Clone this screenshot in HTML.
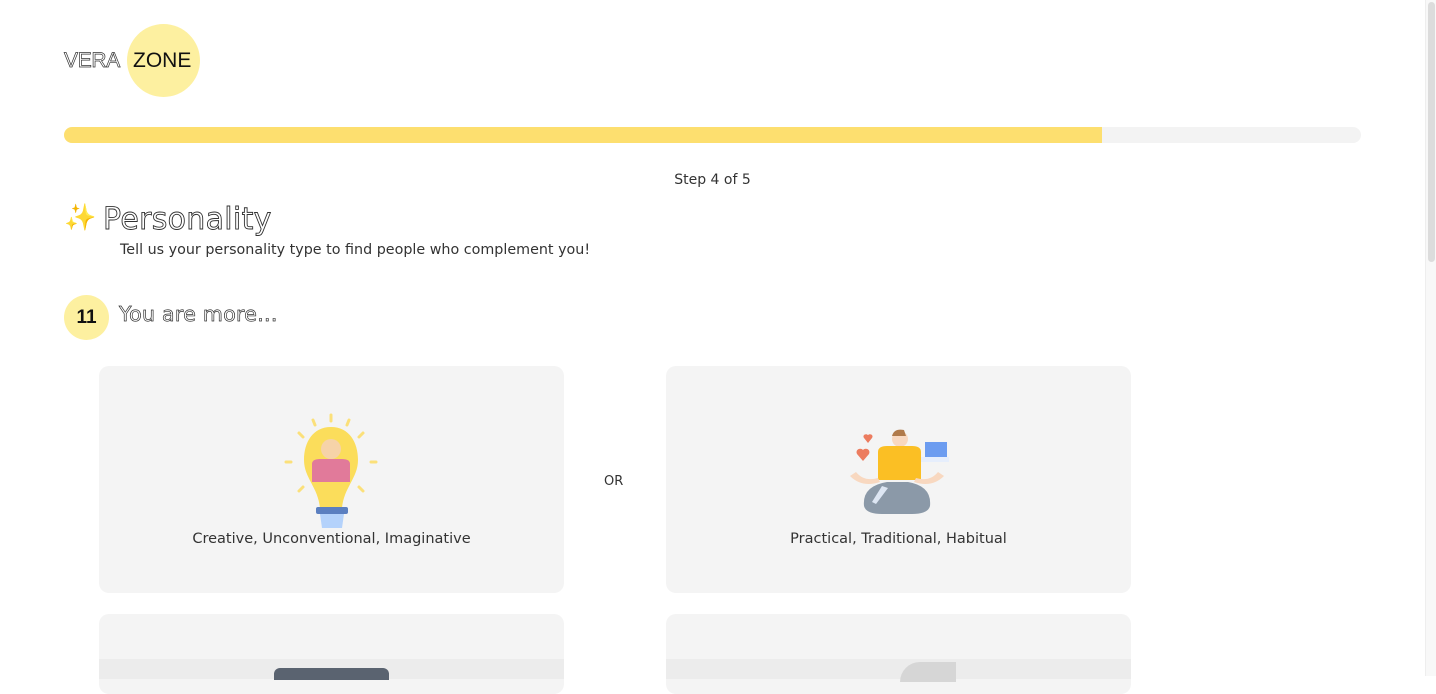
<!DOCTYPE html>
<html><head><style>
*{margin:0;padding:0;box-sizing:border-box}
body{width:1436px;height:676px;overflow:hidden;background:#fff;font-family:"DejaVu Sans",sans-serif;position:relative}
.o{color:#fff;-webkit-text-stroke:0.7px #333}
.abs{position:absolute}
</style></head><body>
<div class="abs" style="left:127px;top:24px;width:73px;height:73px;border-radius:50%;background:#fdf0a0"></div>
<div class="abs o" style="left:64px;top:49px;font-size:21px;letter-spacing:-0.3px;font-family:'Liberation Sans',sans-serif">VERA</div>
<div class="abs" style="left:133px;top:49px;font-size:21px;color:#111;font-family:'Liberation Sans',sans-serif">ZONE</div>
<div class="abs" style="left:64px;top:127px;width:1297px;height:16px;border-radius:8px;background:#f3f3f3"></div>
<div class="abs" style="left:64px;top:127px;width:1038px;height:16px;border-radius:8px 0 0 8px;background:#fddf6f"></div>
<div class="abs" style="left:0;width:1425px;top:172px;text-align:center;font-size:14px;color:#333">Step 4 of 5</div>
<div class="abs" style="left:64px;top:203px;font-size:26px;color:#f5c518">✨</div>
<div class="abs o" style="left:103px;top:202px;font-size:30px;letter-spacing:0.3px;-webkit-text-stroke:0.9px #333">Personality</div>
<div class="abs" style="left:120px;top:242px;font-size:14.3px;color:#333">Tell us your personality type to find people who complement you!</div>
<div class="abs" style="left:64px;top:295px;width:45px;height:45px;border-radius:50%;background:#fdf0a0;font-size:19px;font-weight:bold;text-align:center;line-height:45px;color:#111;font-family:'Liberation Sans',sans-serif">11</div>
<div class="abs o" style="left:119px;top:302px;font-size:20.5px;letter-spacing:0.3px">You are more...</div>
<div class="abs" style="left:99px;top:366px;width:465px;height:227px;border-radius:10px;background:#f4f4f4"></div>
<div class="abs" style="left:666px;top:366px;width:465px;height:227px;border-radius:10px;background:#f4f4f4"></div>
<div class="abs" style="left:99px;top:614px;width:465px;height:80px;border-radius:10px;background:#f4f4f4"></div>
<div class="abs" style="left:666px;top:614px;width:465px;height:80px;border-radius:10px;background:#f4f4f4"></div>
<div class="abs" style="left:99px;top:659px;width:465px;height:20px;background:#ececec"></div>
<div class="abs" style="left:666px;top:659px;width:465px;height:20px;background:#ececec"></div>
<div class="abs" style="left:274px;top:668px;width:115px;height:12px;border-radius:6px 6px 0 0;background:#5a6370"></div>
<div class="abs" style="left:900px;top:662px;width:56px;height:20px;border-radius:40px 0 0 0;background:#d6d6d6"></div>
<svg class="abs" style="left:280px;top:412px" width="102" height="118" viewBox="0 0 102 118">
<g stroke="#fbe07a" stroke-width="3" stroke-linecap="round">
<line x1="51" y1="3" x2="51" y2="9"/><line x1="33" y1="8" x2="35" y2="13"/><line x1="69" y1="8" x2="67" y2="13"/>
<line x1="19" y1="21" x2="23" y2="25"/><line x1="83" y1="21" x2="79" y2="25"/><line x1="6" y1="50" x2="11" y2="50"/><line x1="91" y1="50" x2="96" y2="50"/>
<line x1="19" y1="79" x2="23" y2="75"/><line x1="83" y1="79" x2="79" y2="75"/></g>
<path d="M51 15C33 15 24 30 24 48C24 66 38 75 40 96H62C64 75 78 66 78 48C78 30 69 15 51 15Z" fill="#fbdd5b"/>
<circle cx="51" cy="37" r="10" fill="#f6d3a8"/>
<path d="M32 52Q32 47 40 47H62Q70 47 70 52V70H32Z" fill="#e17a9a"/>
<rect x="36" y="95" width="32" height="7" rx="2" fill="#5b7fc0"/>
<path d="M40 102H64L62 116H42Z" fill="#b4d2fb"/>
</svg>
<svg class="abs" style="left:842px;top:426px" width="110" height="90" viewBox="0 0 110 90">
<path d="M21 24c-3-3-8 0-6 4l6 7 6-7c2-4-3-7-6-4z" fill="#ec7c5f"/>
<path d="M26 9c-2-2-6 0-4 3l4 5 4-5c2-3-2-5-4-3z" fill="#ec7c5f"/>
<rect x="83" y="16" width="22" height="15" fill="#6c9cf0"/><rect x="79" y="31" width="28" height="5" fill="#e6eefc"/>
<circle cx="58" cy="13" r="8" fill="#f8d8c0"/><path d="M50 10Q52 2 62 4L64 10Z" fill="#b07a4a"/>
<path d="M36 26Q36 20 45 20H70Q79 20 79 26V54H36Z" fill="#fbbf24"/>
<path d="M8 50Q20 62 38 56L36 52Q22 56 14 46Z" fill="#f8d8c0"/><path d="M102 50Q90 62 72 56L74 52Q88 56 96 46Z" fill="#f8d8c0"/>
<path d="M22 80Q20 60 45 56H66Q90 60 88 80Q86 88 70 88H40Q24 88 22 80Z" fill="#8b99a8"/>
<path d="M40 60L46 62L34 78L30 76Z" fill="#dde6f3"/>
</svg>
<div class="abs" style="left:99px;width:465px;top:531px;text-align:center;font-size:14.5px;color:#333">Creative, Unconventional, Imaginative</div>
<div class="abs" style="left:666px;width:465px;top:531px;text-align:center;font-size:14.5px;color:#333">Practical, Traditional, Habitual</div>
<div class="abs" style="left:604px;top:474px;font-size:13px;color:#333">OR</div>
<div class="abs" style="left:1425px;top:0;width:11px;height:676px;background:#f8f8f8;border-left:1px solid #eee"></div>
<div class="abs" style="left:1428px;top:2px;width:7px;height:260px;border-radius:4px;background:#dcdcdc"></div>
</body></html>
